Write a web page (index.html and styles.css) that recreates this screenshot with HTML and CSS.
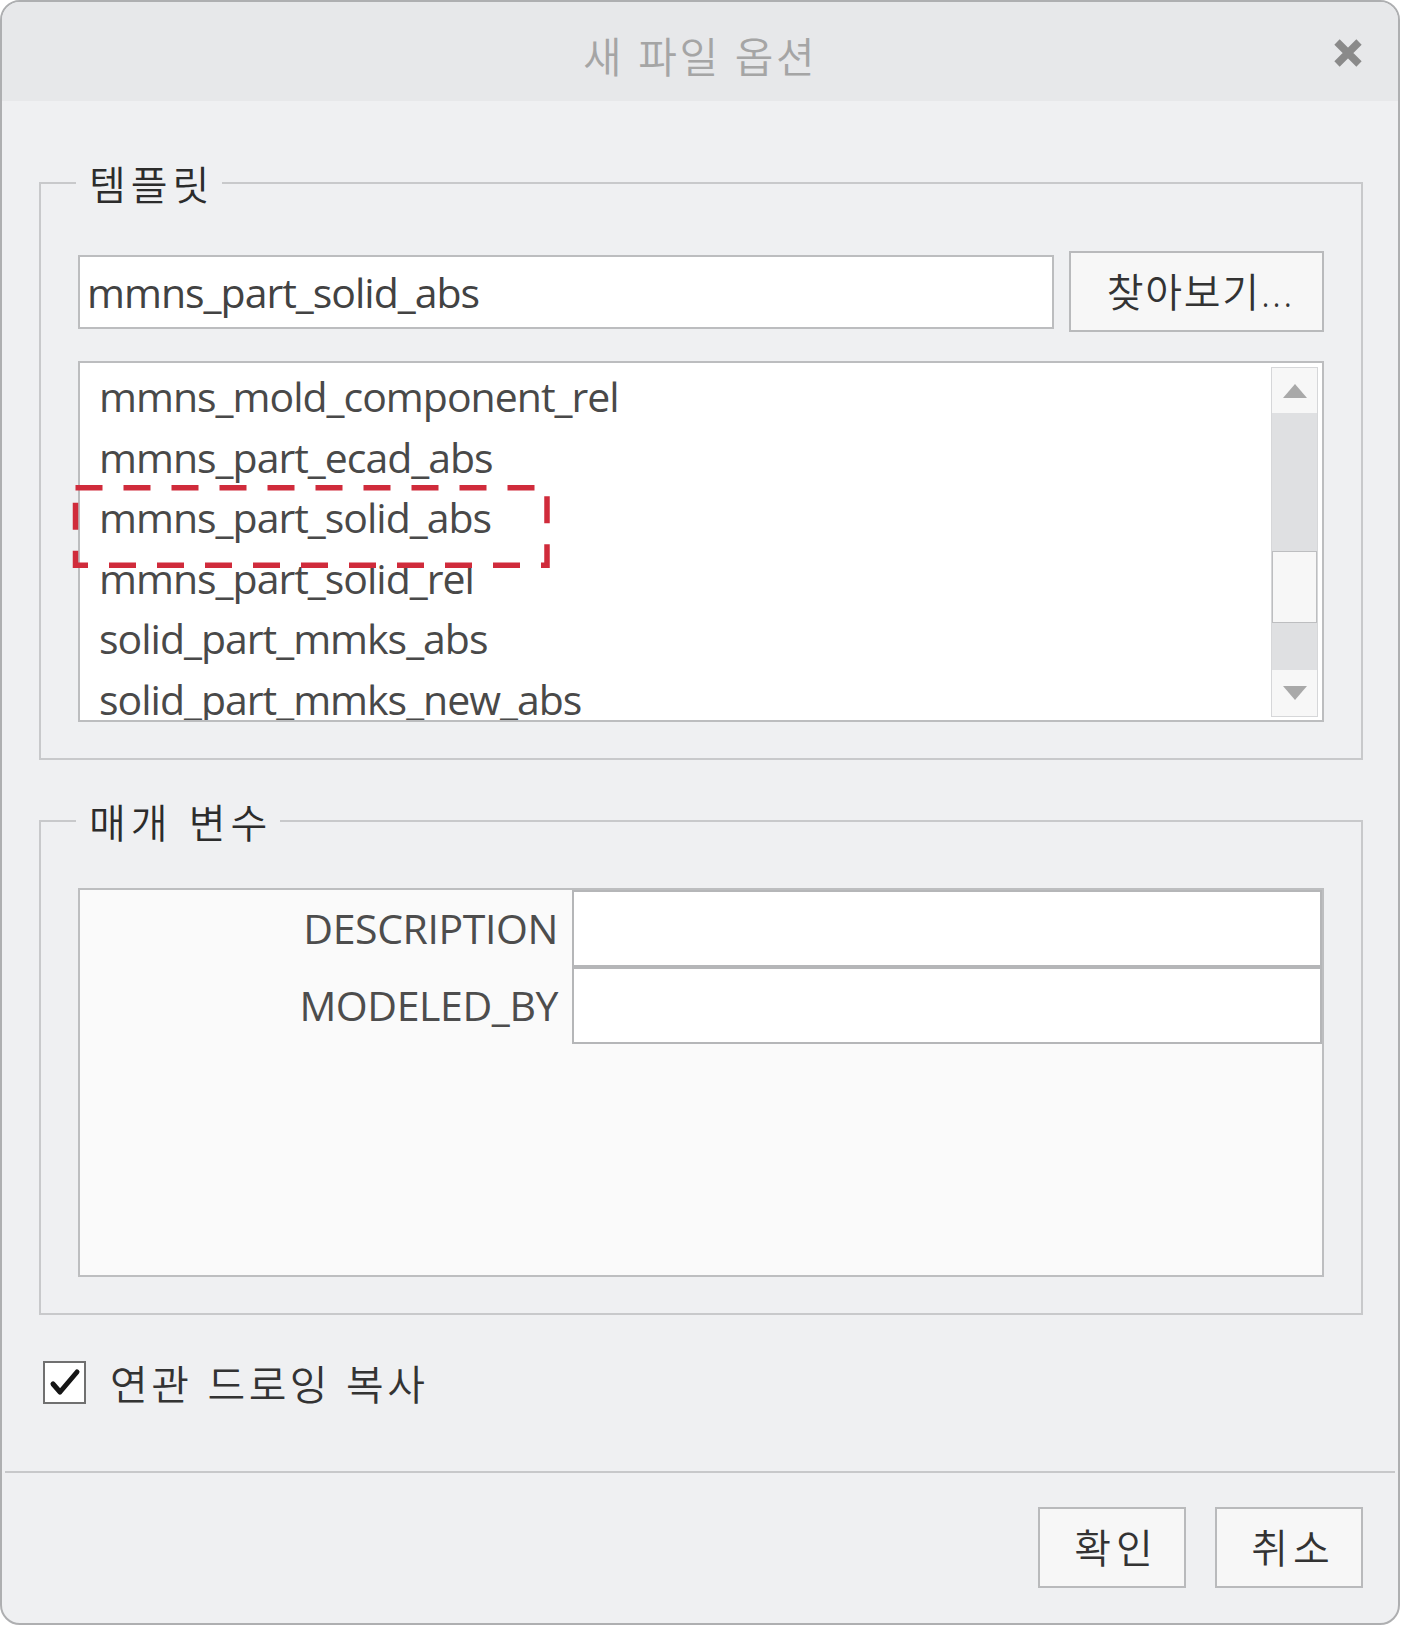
FILE: index.html
```html
<!DOCTYPE html>
<html lang="ko">
<head>
<meta charset="utf-8">
<title>새 파일 옵션</title>
<link rel="stylesheet" href="styles.css">
</head>
<body>
<div class="window">
  <header class="titlebar">
    <span class="spacer"></span>
    <h1 class="title">새 파일 옵션</h1>
    <button class="close" aria-label="닫기">
      <svg width="32" height="32" viewBox="0 0 32 32"><path d="M5 5 L27 27 M27 5 L5 27" stroke="#8a8a8a" stroke-width="7.5" fill="none"/></svg>
    </button>
  </header>

  <main class="content">
    <fieldset class="group template">
      <legend>템플릿</legend>
      <div class="template-row">
        <div class="textfield">mmns_part_solid_abs</div>
        <button class="btn browse">찾아보기...</button>
      </div>
      <div class="listbox">
        <ul class="items">
          <li>mmns_mold_component_rel</li>
          <li>mmns_part_ecad_abs</li>
          <li>mmns_part_solid_abs</li>
          <li>mmns_part_solid_rel</li>
          <li>solid_part_mmks_abs</li>
          <li>solid_part_mmks_new_abs</li>
        </ul>
        <div class="scrollbar">
          <div class="sb-btn"><svg width="24" height="14" viewBox="0 0 24 14"><polygon points="0,14 12,0 24,14" fill="#a9a9a9"/></svg></div>
          <div class="sb-track sb-track-top"></div>
          <div class="sb-thumb"></div>
          <div class="sb-track sb-track-bottom"></div>
          <div class="sb-btn"><svg width="24" height="14" viewBox="0 0 24 14"><polygon points="0,0 24,0 12,14" fill="#a9a9a9"/></svg></div>
        </div>
        <svg class="highlight" width="481" height="84" viewBox="0 0 481 84">
          <rect x="3.5" y="2.75" width="471.5" height="77.5" fill="none" stroke="#d02b3b" stroke-width="5.5" stroke-dasharray="27 21"/>
        </svg>
      </div>
    </fieldset>

    <fieldset class="group params-group">
      <legend>매개 변수</legend>
      <div class="params">
        <div class="param-row">
          <div class="param-label">DESCRIPTION</div>
          <div class="param-value"></div>
        </div>
        <div class="param-row">
          <div class="param-label">MODELED_BY</div>
          <div class="param-value"></div>
        </div>
      </div>
    </fieldset>

    <label class="check">
      <span class="checkbox">
        <svg width="39" height="39" viewBox="0 0 39 39"><path d="M8 21 L15 29 L32 9" stroke="#151515" stroke-width="5" fill="none" stroke-linecap="round" stroke-linejoin="round"/></svg>
      </span>
      <span class="check-label">연관 드로잉 복사</span>
    </label>
  </main>

  <footer class="footer">
    <button class="btn action">확인</button>
    <button class="btn action">취소</button>
  </footer>
</div>
</body>
</html>
```

FILE: styles.css
```css
* { box-sizing: border-box; }

html, body {
  margin: 0;
  padding: 0;
  background: #ffffff;
}

body {
  font-family: "Open Sans", "Noto Sans CJK KR", sans-serif;
}

button {
  font: inherit;
  margin: 0;
  padding: 0;
}

.window {
  width: 1400px;
  height: 1625px;
  border: 2px solid #aeafb1;
  border-radius: 20px;
  background: #eff0f2;
  overflow: hidden;
  display: flex;
  flex-direction: column;
}

/* ---------- title bar ---------- */
.titlebar {
  flex: 0 0 99px;
  background: #e7e8ea;
  display: grid;
  grid-template-columns: 1fr auto 1fr;
  align-items: center;
}

.title {
  margin: 0;
  padding-top: 6px;
  font-family: "Noto Sans CJK KR", sans-serif;
  font-weight: 350;
  font-size: 42px;
  line-height: 50px;
  letter-spacing: 2.5px;
  color: #a5a5a5;
}

.close {
  justify-self: end;
  margin-right: 34px;
  margin-top: 3px;
  width: 32px;
  height: 32px;
  border: 0;
  background: transparent;
  display: flex;
}

/* ---------- content ---------- */
.content {
  flex: 1;
  padding: 60px 35px 0 37px;
}

.group {
  margin: 0;
  min-width: 0;
  border: 2px solid #c8c9cb;
  padding: 0 37px 36px;
}

.group legend {
  margin-left: -2px;
  padding: 0 8px 0 13px;
  font-family: "Noto Sans CJK KR", sans-serif;
  font-weight: 350;
  font-size: 40px;
  line-height: 44px;
  letter-spacing: 5px;
  color: #2c2c2c;
}

.template-row {
  margin-top: 46px;
  display: flex;
  align-items: center;
  gap: 15px;
  height: 81px;
}

.textfield {
  flex: 1;
  height: 74px;
  background: #ffffff;
  border: 2px solid #bcbdbf;
  padding-left: 7px;
  font-size: 41px;
  line-height: 70px;
  letter-spacing: -1px;
  color: #424242;
}

.btn {
  background: #f7f7f7;
  border: 2px solid #b9babc;
  color: #333333;
  font-family: "Open Sans", "Noto Sans CJK KR", sans-serif;
  font-weight: 350;
  font-size: 40px;
  line-height: 44px;
  display: flex;
  align-items: center;
  justify-content: center;
}

.browse {
  width: 255px;
  height: 81px;
  padding-left: 8px;
  letter-spacing: 1.7px;
}

/* ---------- list box ---------- */
.listbox {
  position: relative;
  margin-top: 29px;
  height: 361px;
  border: 2px solid #bcbdbf;
  background: #ffffff;
  display: flex;
}

.items {
  flex: 1;
  margin: 0;
  padding: 3px 0 0 19px;
  list-style: none;
  overflow: hidden;
  font-size: 41px;
  line-height: 60.6px;
  letter-spacing: -1px;
  color: #494949;
  white-space: nowrap;
}

.scrollbar {
  width: 47px;
  margin: 4px 4px 3px 4px;
  border: 1px solid #d6d7d9;
  background: #dfe0e2;
  display: flex;
  flex-direction: column;
}

.sb-btn {
  height: 45px;
  background: #f7f7f7;
  display: flex;
  align-items: center;
  justify-content: center;
}

.sb-btn:last-child {
  height: 46px;
}

.sb-track-top { height: 138px; }
.sb-track-bottom { height: 47px; }

.sb-thumb {
  height: 72px;
  background: #f7f7f7;
  border: 1px solid #bdbec0;
}

.highlight {
  position: absolute;
  left: -8px;
  top: 122px;
}

/* ---------- parameters ---------- */
.params-group {
  margin-top: 39px;
}

.params {
  margin-top: 45px;
  height: 389px;
  border: 2px solid #bdbec0;
  background: #fafafa;
}

.param-row {
  display: flex;
}

.param-label {
  width: 492px;
  padding-right: 14px;
  text-align: right;
  font-size: 41px;
  line-height: 77px;
  letter-spacing: -0.4px;
  color: #4d4d4d;
}

.param-value {
  flex: 1;
  height: 77px;
  background: #ffffff;
  border: 2px solid #b5b6b8;
}

/* ---------- checkbox ---------- */
.check {
  margin: 45px 0 0 4px;
  display: flex;
  align-items: center;
  gap: 24px;
}

.checkbox {
  width: 43px;
  height: 43px;
  border: 2px solid #707070;
  background: #ffffff;
  display: flex;
}

.check-label {
  font-family: "Noto Sans CJK KR", sans-serif;
  font-weight: 350;
  font-size: 41px;
  line-height: 44px;
  letter-spacing: 3.5px;
  color: #333333;
}

/* ---------- footer ---------- */
.footer {
  flex: 0 0 152px;
  margin: 0 3px;
  border-top: 2px solid #c7c8ca;
  padding: 34px 32px 0 0;
  display: flex;
  justify-content: flex-end;
  align-items: flex-start;
  gap: 29px;
}

.action {
  width: 148px;
  height: 81px;
  padding-left: 8px;
  letter-spacing: 5px;
}
```
